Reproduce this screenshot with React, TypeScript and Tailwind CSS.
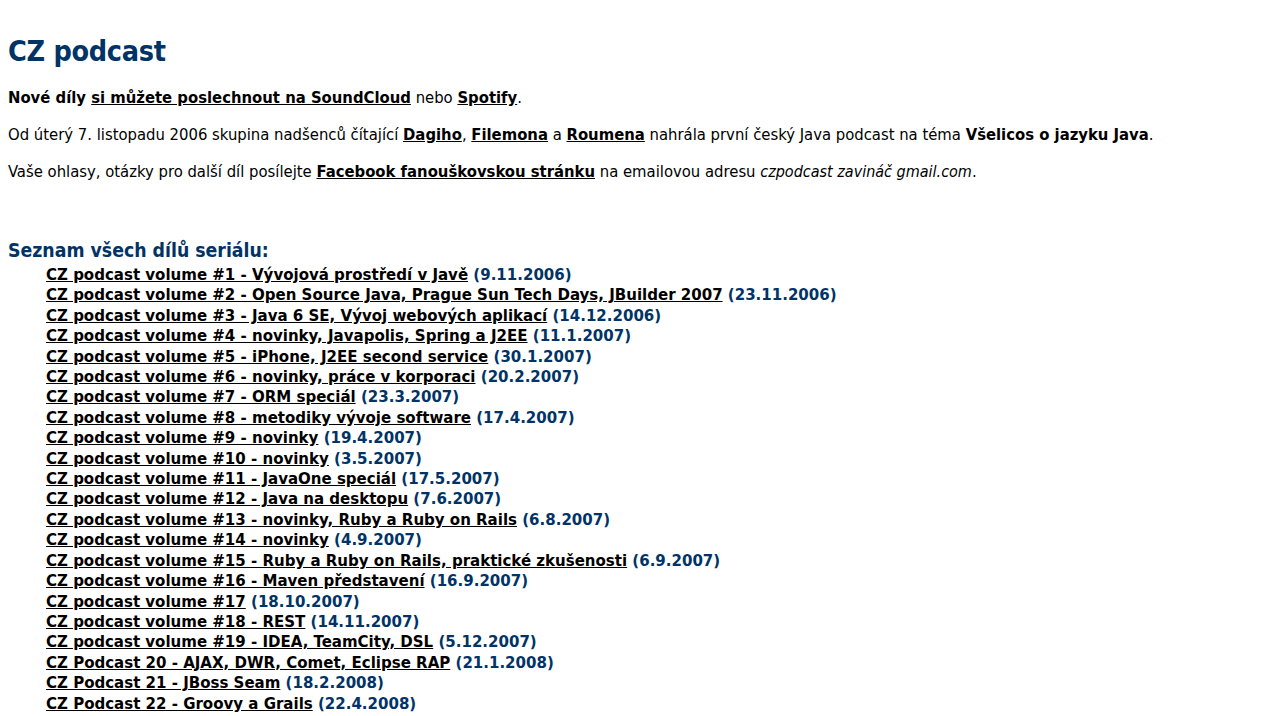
const EPISODES: [string, string][] = [
  ['CZ podcast volume #1 - Vývojová prostředí v Javě', '9.11.2006'],
  ['CZ podcast volume #2 - Open Source Java, Prague Sun Tech Days, JBuilder 2007', '23.11.2006'],
  ['CZ podcast volume #3 - Java 6 SE, Vývoj webových aplikací', '14.12.2006'],
  ['CZ podcast volume #4 - novinky, Javapolis, Spring a J2EE', '11.1.2007'],
  ['CZ podcast volume #5 - iPhone, J2EE second service', '30.1.2007'],
  ['CZ podcast volume #6 - novinky, práce v korporaci', '20.2.2007'],
  ['CZ podcast volume #7 - ORM speciál', '23.3.2007'],
  ['CZ podcast volume #8 - metodiky vývoje software', '17.4.2007'],
  ['CZ podcast volume #9 - novinky', '19.4.2007'],
  ['CZ podcast volume #10 - novinky', '3.5.2007'],
  ['CZ podcast volume #11 - JavaOne speciál', '17.5.2007'],
  ['CZ podcast volume #12 - Java na desktopu', '7.6.2007'],
  ['CZ podcast volume #13 - novinky, Ruby a Ruby on Rails', '6.8.2007'],
  ['CZ podcast volume #14 - novinky', '4.9.2007'],
  ['CZ podcast volume #15 - Ruby a Ruby on Rails, praktické zkušenosti', '6.9.2007'],
  ['CZ podcast volume #16 - Maven představení', '16.9.2007'],
  ['CZ podcast volume #17', '18.10.2007'],
  ['CZ podcast volume #18 - REST', '14.11.2007'],
  ['CZ podcast volume #19 - IDEA, TeamCity, DSL', '5.12.2007'],
  ['CZ Podcast 20 - AJAX, DWR, Comet, Eclipse RAP', '21.1.2008'],
  ['CZ Podcast 21 - JBoss Seam', '18.2.2008'],
  ['CZ Podcast 22 - Groovy a Grails', '22.4.2008'],
]

// Plain old-school page: Tahoma-ish text, dark blue headings, underlined bold links.
export default function App() {
  return (
    <div className="min-h-screen bg-white px-2 text-black"
      style={{ fontFamily: '"DejaVu Sans Condensed", "DejaVu Sans", Tahoma, sans-serif' }}>
      <h1 className="mt-[33px] text-[28.5px] font-bold leading-[38px] tracking-[-0.3px] text-[#003366]">CZ podcast</h1>

      <p className="mt-[17px] text-[16.5px] leading-[20px]">
        <b>Nové díly </b>
        <a href="#" className="font-bold underline">si můžete poslechnout na SoundCloud</a>
        {' '}nebo{' '}
        <a href="#" className="font-bold underline">Spotify</a>.
      </p>

      <p className="mt-[17px] text-[16.5px] leading-[20px]">
        Od úterý 7. listopadu 2006 skupina nadšenců čítající{' '}
        <a href="#" className="font-bold underline">Dagiho</a>,{' '}
        <a href="#" className="font-bold underline">Filemona</a> a{' '}
        <a href="#" className="font-bold underline">Roumena</a> nahrála první český Java podcast na téma{' '}
        <b>Všelicos o jazyku Java</b>.
      </p>

      <p className="mt-[17px] text-[16.5px] leading-[20px]">
        Vaše ohlasy, otázky pro další díl posílejte{' '}
        <a href="#" className="font-bold underline">Facebook fanouškovskou stránku</a>
        {' '}na emailovou adresu <i className="text-[16px]">czpodcast zavináč gmail.com</i>.
      </p>

      <h2 className="mt-[57px] text-[19.3px] font-bold leading-[24px] text-[#003366]">Seznam všech dílů seriálu:</h2>

      <ul className="mt-[1px] pl-[38px]">
        {EPISODES.map(([title, date]) => (
          <li key={title} className="text-[16.7px] font-bold leading-[20.4px]">
            <a href="#" className="underline">{title}</a>{' '}
            <span className="text-[#003366]">({date})</span>
          </li>
        ))}
      </ul>
    </div>
  )
}
